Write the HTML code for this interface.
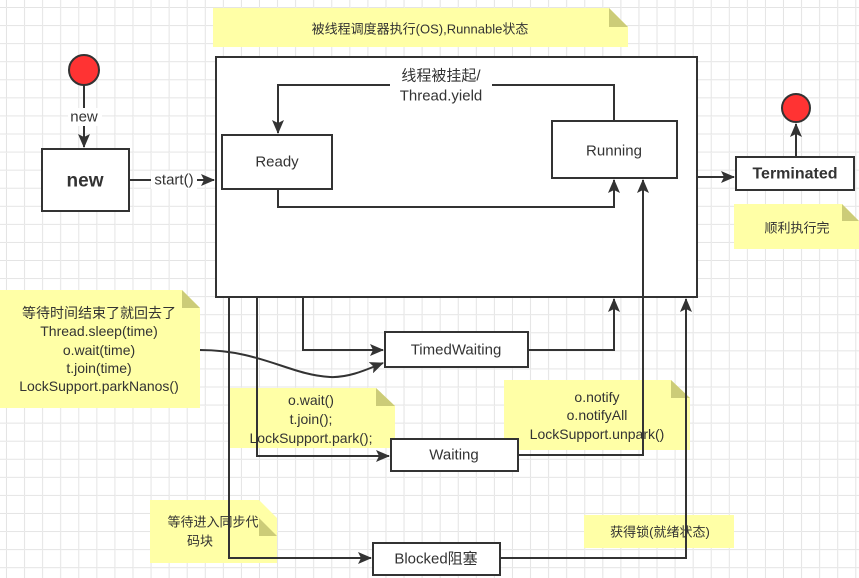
<!DOCTYPE html>
<html><head><meta charset="utf-8"><style>
html,body{margin:0;padding:0;width:859px;height:578px;overflow:hidden;background:#fff}
svg{display:block}
text{font-family:"Liberation Sans","Noto Sans CJK SC",sans-serif;fill:#333;text-anchor:middle;dominant-baseline:central}
</style></head><body>
<svg width="859" height="578" viewBox="0 0 859 578" xmlns="http://www.w3.org/2000/svg">
<defs>
<pattern id="g" x="7" y="8" width="18.07" height="18.07" patternUnits="userSpaceOnUse">
<path d="M18.07 0V18.07M0 18.07H18.07" stroke="#e4e4e4" stroke-width="1" fill="none" transform="translate(-0.5,-0.5)"/>
</pattern>
<marker id="a" markerWidth="14" markerHeight="12" refX="13" refY="6" orient="auto" markerUnits="userSpaceOnUse">
<path d="M0 0L14 6L0 12L3 6Z" fill="#333"/>
</marker>
</defs>
<rect width="859" height="578" fill="url(#g)"/>
<g fill="#ffffa6">
<path d="M213 8H609L628 27V47H213Z"/>
<path d="M228 217H409L427 235V257H228Z"/>
<path d="M505 220H672L690 238V260H505Z"/>
<path d="M734 204H842L859 221V249H734Z"/>
<path d="M0 290H182L200 308V408H0Z"/>
<path d="M228 388H376L395 406V448H228Z"/>
<path d="M504 380H671L690 398V450H504Z"/>
<path d="M150 500H259L277 518V563H150Z"/>
<path d="M584 515H734V548H584Z"/>
</g>
<g fill="#cccc78">
<path d="M609 8L628 27H609Z"/><path d="M409 217L427 235H409Z"/><path d="M672 220L690 238H672Z"/>
<path d="M842 204L859 221H842Z"/><path d="M182 290L200 308H182Z"/><path d="M376 388L395 406H376Z"/>
<path d="M671 380L690 398H671Z"/><path d="M259 518L277 536H259Z"/>
</g>
<g font-size="13">
<text x="420" y="29">被线程调度器执行(OS),Runnable状态</text>
<text x="327" y="239">CPU等待队列排队</text>
<text x="597" y="241">在CPU上运行</text>
<text x="797" y="228">顺利执行完</text>
<text x="660" y="532">获得锁(就绪状态)</text>
<text x="213" y="522">等待进入同步代</text>
<text x="200" y="541">码块</text>
</g>
<g font-size="14">
<text x="99" y="313">等待时间结束了就回去了</text>
<text x="99" y="331">Thread.sleep(time)</text>
<text x="99" y="350">o.wait(time)</text>
<text x="99" y="368">t.join(time)</text>
<text x="99" y="386">LockSupport.parkNanos()</text>
<text x="311" y="400">o.wait()</text>
<text x="311" y="419">t.join();</text>
<text x="311" y="438">LockSupport.park();</text>
<text x="597" y="397">o.notify</text>
<text x="597" y="415">o.notifyAll</text>
<text x="597" y="434">LockSupport.unpark()</text>
</g>
<rect x="216" y="57" width="481" height="240" fill="#fff" stroke="#333" stroke-width="2"/>
<g stroke="#333" stroke-width="2" fill="none">
<path d="M614 121V85H278V133" marker-end="url(#a)"/>
<path d="M278 189V207H614V180" marker-end="url(#a)"/>
<path d="M84 85V147" marker-end="url(#a)"/>
<path d="M129 180H214" marker-end="url(#a)"/>
<path d="M697 177H734" marker-end="url(#a)"/>
<path d="M796 157V124" marker-end="url(#a)"/>
<path d="M303 297V350H383" marker-end="url(#a)"/>
<path d="M528 350H614V299" marker-end="url(#a)"/>
<path d="M200 350C260 350 290 375 330 377C350 378 370 368 383 363" marker-end="url(#a)"/>
<path d="M257 297V456H389" marker-end="url(#a)"/>
<path d="M518 455H643V180" marker-end="url(#a)"/>
<path d="M229 297V558H371" marker-end="url(#a)"/>
<path d="M500 558H686V299" marker-end="url(#a)"/>
</g>
<g fill="#fff" stroke="#333" stroke-width="2">
<rect x="222" y="135" width="110" height="54"/>
<rect x="552" y="121" width="125" height="57"/>
<rect x="42" y="149" width="87" height="62"/>
<rect x="736" y="157" width="118" height="33"/>
<rect x="385" y="332" width="143" height="35"/>
<rect x="391" y="439" width="127" height="32"/>
<rect x="373" y="543" width="127" height="32"/>
<circle cx="84" cy="70" r="15" fill="#ff3333"/>
<circle cx="796" cy="108" r="14" fill="#ff3333"/>
</g>
<rect x="390" y="66" width="102" height="40" fill="#fff"/>
<rect x="68" y="108" width="34" height="18" fill="#fff"/>
<rect x="151" y="171" width="46" height="18" fill="#fff"/>
<g font-size="15">
<text x="441" y="76">线程被挂起/</text>
<text x="441" y="96">Thread.yield</text>
<text x="84" y="117">new</text>
<text x="174" y="180">start()</text>
<text x="277" y="162">Ready</text>
<text x="614" y="151">Running</text>
<text x="456" y="350">TimedWaiting</text>
<text x="454" y="455">Waiting</text>
<text x="436" y="559">Blocked阻塞</text>
<text x="85" y="181" font-size="19" font-weight="bold">new</text>
<text x="795" y="174" font-size="16" font-weight="bold">Terminated</text>
</g>
</svg>
</body></html>
